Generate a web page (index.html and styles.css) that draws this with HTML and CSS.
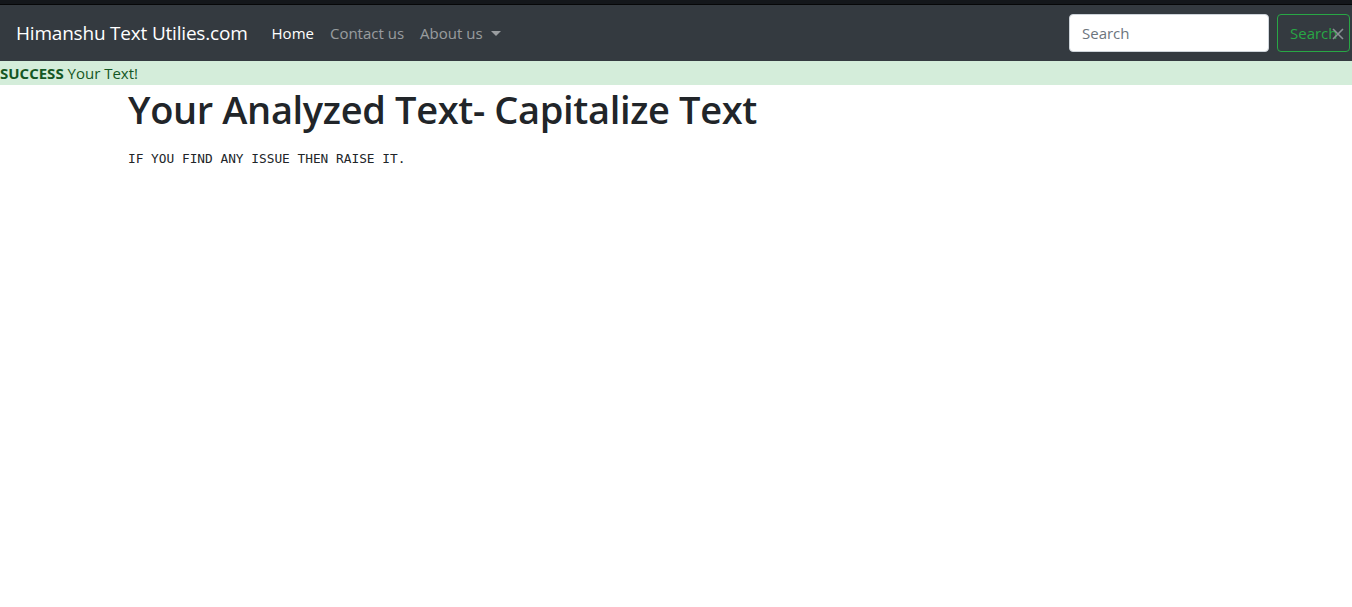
FILE: index.html
```html
<!DOCTYPE html>
<html lang="en">
<head>
<meta charset="utf-8">
<title>TextUtils</title>
<link rel="stylesheet" href="styles.css">
</head>
<body>
<div class="topstrip"></div>
<nav class="navbar">
  <a class="brand" href="#">Himanshu Text Utilies.com</a>
  <ul class="nav">
    <li><a class="nav-link active" href="#">Home</a></li>
    <li><a class="nav-link" href="#">Contact us</a></li>
    <li><a class="nav-link dropdown" href="#">About us</a></li>
  </ul>
  <form class="search">
    <input class="search-input" type="search" placeholder="Search">
    <button class="search-btn" type="button">Search<span class="close-x"><svg width="14" height="14" viewBox="0 0 14 14"><path d="M2 2 L12 12 M12 2 L2 12" stroke="#8a8f94" stroke-width="1.6" fill="none"/></svg></span></button>
  </form>
</nav>
<div class="alert"><strong>SUCCESS</strong> Your Text!</div>
<main class="container">
  <h1 class="title">Your Analyzed Text- Capitalize Text</h1>
  <pre class="result">IF YOU FIND ANY ISSUE THEN RAISE IT.</pre>
</main>
</body>
</html>
```
FILE: styles.css
```css
* { box-sizing: border-box; }
html, body { margin: 0; padding: 0; }
body {
  font-family: "Open Sans", "Noto Sans", sans-serif;
  color: #212529;
  background: #fff;
  overflow: hidden;
}
.topstrip {
  height: 5px;
  background: #14171b;
  border-bottom: 1px solid #060708;
}
.navbar {
  height: 56px;
  background: #343a40;
  display: flex;
  align-items: center;
  padding: 0 0 0 16px;
}
.brand {
  color: #fff;
  font-size: 19px;
  text-decoration: none;
  margin-right: 16px;
  letter-spacing: -0.2px;
}
.nav {
  list-style: none;
  display: flex;
  margin: 0;
  padding: 0;
}
.nav-link {
  display: block;
  padding: 8px 8px;
  font-size: 15px;
  color: rgba(255,255,255,0.5);
  text-decoration: none;
}
.nav-link.active { color: #fff; }
.dropdown::after {
  content: "";
  display: inline-block;
  margin-left: 8px;
  vertical-align: 3px;
  border-top: 5px solid rgba(255,255,255,0.5);
  border-left: 5px solid transparent;
  border-right: 5px solid transparent;
}
.search {
  margin-left: auto;
  display: flex;
  gap: 8px;
  align-items: center;
}
.search-input {
  width: 200px;
  height: 38px;
  border: 1px solid #ced4da;
  border-radius: 4px;
  padding: 6px 12px;
  font-family: inherit;
  font-size: 15px;
  color: #495057;
}
.search-input::placeholder { color: #6c757d; }
.search-btn {
  width: 73px;
  height: 38px;
  margin-right: 2px;
  border: 1px solid #28a745;
  border-radius: 4px;
  background: transparent;
  color: #28a745;
  font-family: inherit;
  font-size: 15px;
  padding: 0 0 0 12px;
  text-align: left;
  white-space: nowrap;
  overflow: hidden;
  position: relative;
}
.close-x {
  position: absolute;
  right: 4px;
  top: 12px;
  line-height: 0;
}
.alert {
  background: #d4edda;
  color: #155724;
  font-size: 15px;
  height: 24px;
  line-height: 24px;
  padding: 0;
}
.container {
  padding-left: 128px;
}
.title {
  font-weight: 600;
  font-size: 38px;
  line-height: 1.2;
  margin: 2px 0 18px;
  letter-spacing: -0.35px;
}
.result {
  font-family: "DejaVu Sans Mono", "Liberation Mono", monospace;
  font-size: 12.8px;
  margin: 0;
}
```
